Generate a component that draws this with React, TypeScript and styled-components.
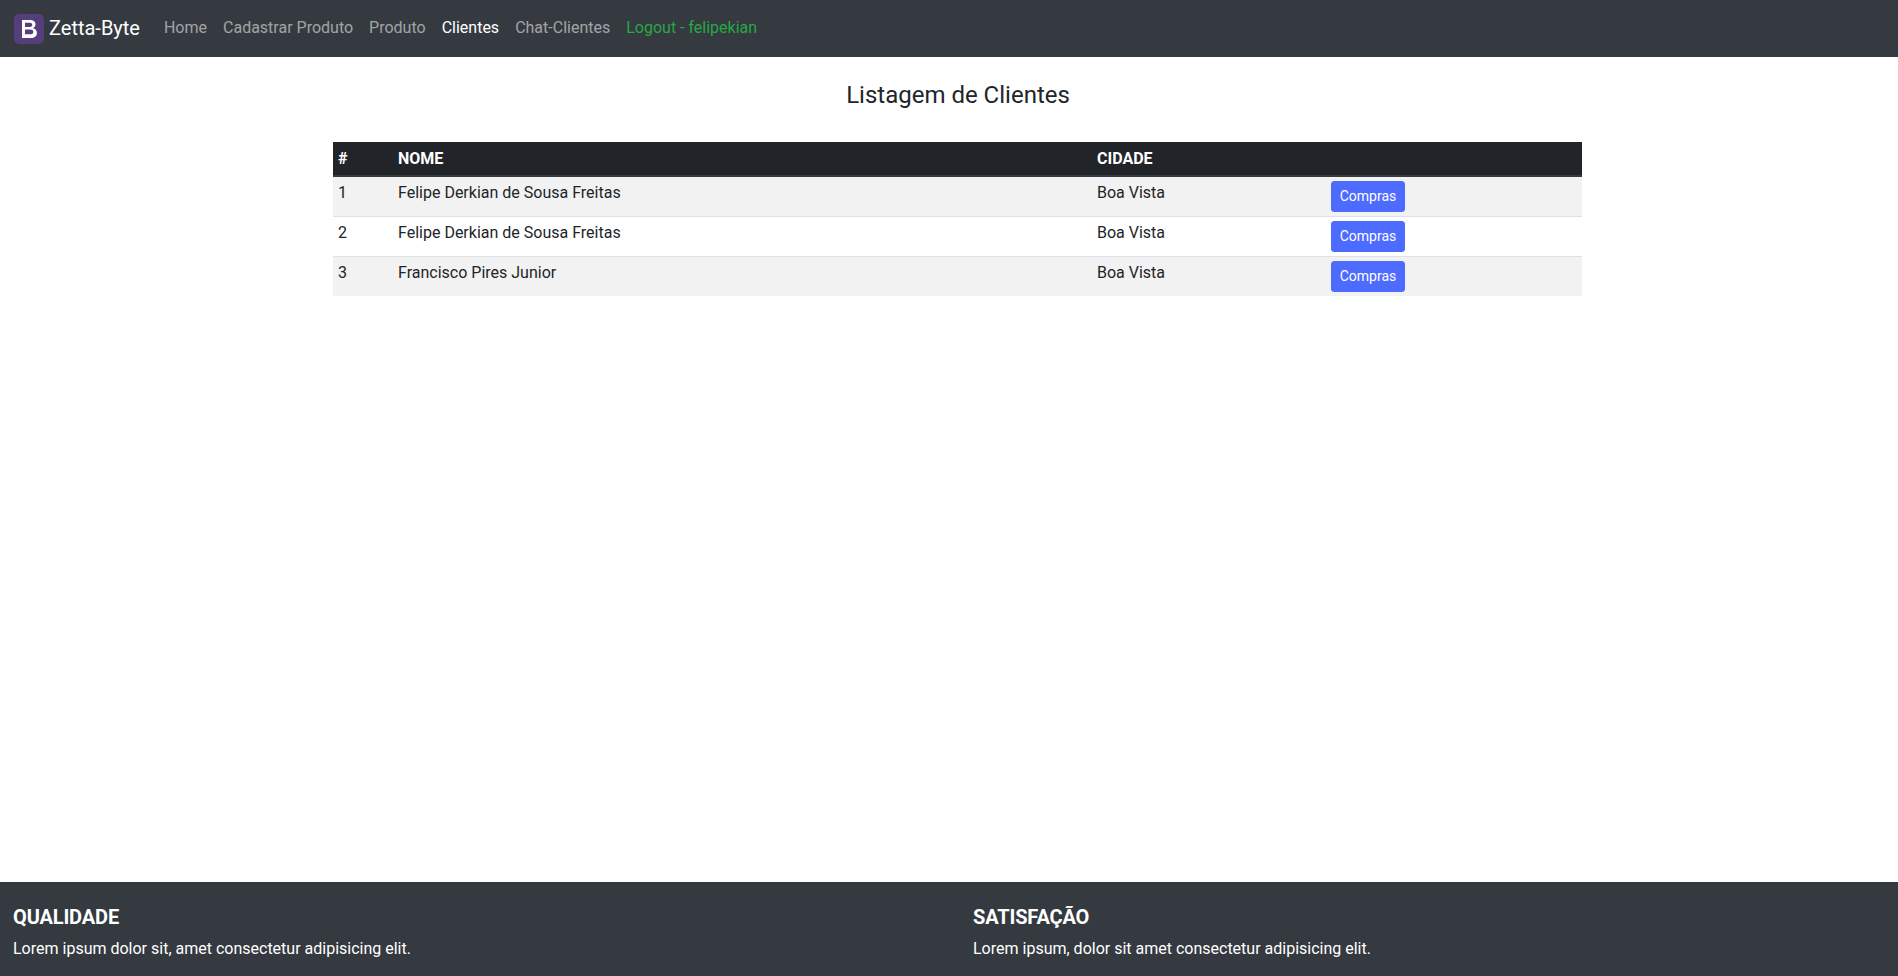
import React from 'react';
import styled, { createGlobalStyle } from 'styled-components';

const GlobalStyle = createGlobalStyle`
  * {
    box-sizing: border-box;
  }

  html,
  body {
    margin: 0;
    height: 100%;
    overflow: hidden;
  }

  body {
    font-family: 'Roboto', Arial, sans-serif;
    font-size: 16px;
    line-height: 24px;
    color: #212529;
    background: #fff;
  }
`;

const Page = styled.div`
  display: flex;
  flex-direction: column;
  height: 100vh;
  overflow: hidden;
`;

const Navbar = styled.nav`
  display: flex;
  align-items: center;
  flex: none;
  height: 57px;
  padding: 0 14px 1px;
  background: #343a40;
`;

const Brand = styled.a`
  display: flex;
  align-items: center;
  gap: 5px;
  margin-right: 16px;
  font-size: 20px;
  line-height: 30px;
  color: #fff;
`;

const Logo = styled.svg`
  display: block;
  width: 30px;
  height: 30px;
  margin-top: 2px;
`;

const NavList = styled.div`
  display: flex;
`;

const NavLink = styled.a<{ $variant?: 'active' | 'success' }>`
  padding: 8px;
  color: ${(props) =>
    props.$variant === 'active'
      ? '#fff'
      : props.$variant === 'success'
        ? '#28a745'
        : 'rgba(255, 255, 255, 0.55)'};
`;

const Main = styled.main`
  flex: 1;
  padding: 0 316px 0 333px;
`;

const Title = styled.h4`
  margin: 0 0 32px;
  padding: 24px 0 0 1px;
  font-size: 24px;
  font-weight: 400;
  line-height: 29px;
  text-align: center;
  color: #212529;
`;

const Table = styled.table`
  width: 100%;
  border-collapse: collapse;
  table-layout: fixed;
  color: #212529;
`;

const HeadCell = styled.th<{ $width: number }>`
  width: ${(props) => props.$width}px;
  padding: 4px 5px;
  height: 34px;
  background: #212529;
  border-bottom: 2px solid #373b3e;
  color: #fff;
  font-weight: 700;
  text-align: left;
`;

const Row = styled.tr<{ $striped: boolean }>`
  height: 40px;
  background: ${(props) => (props.$striped ? '#f2f2f2' : '#fff')};
  border-bottom: 1px solid #dee2e6;

  &:last-child {
    height: 39px;
    border-bottom: 0;
  }
`;

const Cell = styled.td`
  padding: 4px 5px;
  vertical-align: top;
`;

const BuyButton = styled.button`
  display: block;
  width: 74px;
  height: 31px;
  padding: 0;
  border: 1px solid #4e6bff;
  border-radius: 3px;
  background: #4e6bff;
  color: #fff;
  font-family: inherit;
  font-size: 14px;
  line-height: 21px;
`;

const Footer = styled.footer`
  display: grid;
  flex: none;
  grid-template-columns: 960px 1fr;
  height: 94px;
  padding: 23px 13px 0;
  background: #343a40;
  color: #fff;
`;

const FooterTitle = styled.h5`
  margin: 0 0 8px;
  font-size: 20px;
  font-weight: 700;
  line-height: 24px;
  letter-spacing: -0.15px;
`;

const FooterText = styled.p`
  margin: 0;
`;

const clients = [
  { id: 1, name: 'Felipe Derkian de Sousa Freitas', city: 'Boa Vista' },
  { id: 2, name: 'Felipe Derkian de Sousa Freitas', city: 'Boa Vista' },
  { id: 3, name: 'Francisco Pires Junior', city: 'Boa Vista' },
];

const App: React.FC = () => {
  return (
    <Page>
      <GlobalStyle />
      <Navbar>
        <Brand>
          <Logo viewBox="0 0 30 30" aria-hidden="true">
            <rect width="30" height="30" rx="5" fill="#563d7c" />
            <path
              d="M8 6h8c3.4 0 5.5 1.7 5.5 4.5 0 1.8-1 3.1-2.6 3.7 2.4.5 4 2.2 4 4.7 0 3.2-2.4 5.1-6 5.1H8V6zm3 2.7v4.3h4.4c1.9 0 2.9-.8 2.9-2.2s-1-2.1-2.9-2.1H11zm0 6.9v4.7h5c2.2 0 3.3-.8 3.3-2.4s-1.1-2.3-3.3-2.3h-5z"
              fill="#fff"
              fillRule="evenodd"
            />
          </Logo>
          Zetta-Byte
        </Brand>
        <NavList>
          <NavLink>Home</NavLink>
          <NavLink>Cadastrar Produto</NavLink>
          <NavLink>Produto</NavLink>
          <NavLink $variant="active">Clientes</NavLink>
          <NavLink>Chat-Clientes</NavLink>
          <NavLink $variant="success">Logout - felipekian</NavLink>
        </NavList>
      </Navbar>
      <Main>
        <Title>Listagem de Clientes</Title>
        <Table>
          <thead>
            <tr>
              <HeadCell $width={60}>#</HeadCell>
              <HeadCell $width={699}>NOME</HeadCell>
              <HeadCell $width={234}>CIDADE</HeadCell>
              <HeadCell $width={256} />
            </tr>
          </thead>
          <tbody>
            {clients.map((client, index) => (
              <Row key={client.id} $striped={index % 2 === 0}>
                <Cell>{client.id}</Cell>
                <Cell>{client.name}</Cell>
                <Cell>{client.city}</Cell>
                <Cell>
                  <BuyButton>Compras</BuyButton>
                </Cell>
              </Row>
            ))}
          </tbody>
        </Table>
      </Main>
      <Footer>
        <div>
          <FooterTitle>QUALIDADE</FooterTitle>
          <FooterText>Lorem ipsum dolor sit, amet consectetur adipisicing elit.</FooterText>
        </div>
        <div>
          <FooterTitle>SATISFAÇÃO</FooterTitle>
          <FooterText>Lorem ipsum, dolor sit amet consectetur adipisicing elit.</FooterText>
        </div>
      </Footer>
    </Page>
  );
};

export default App;
